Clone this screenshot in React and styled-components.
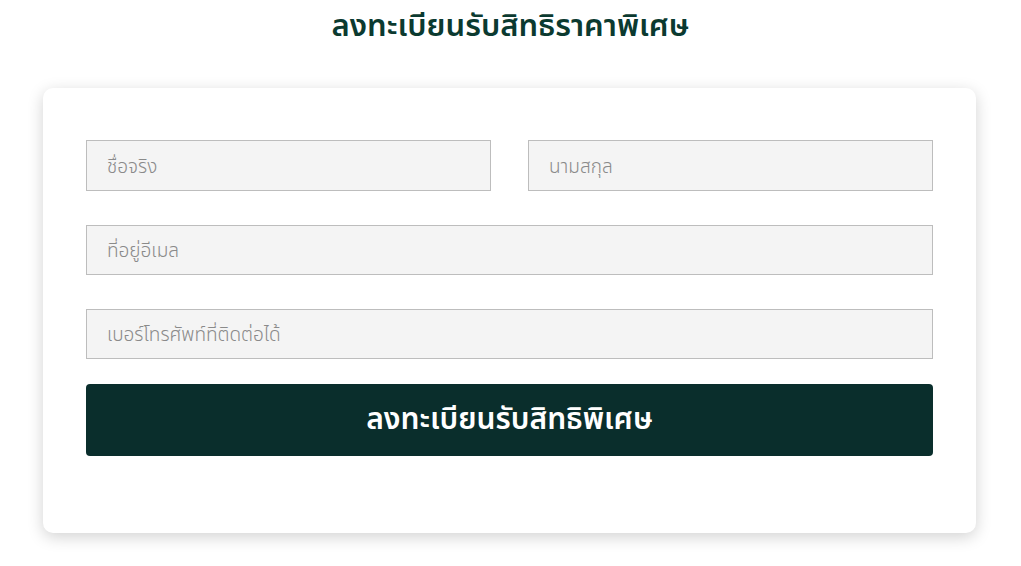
import styled, { createGlobalStyle } from "styled-components";

const GlobalStyle = createGlobalStyle`
  body {
    margin: 0;
    background: #ffffff;
    font-family: "Noto Sans", "Noto Sans Thai", sans-serif;
  }
`;

const App = () => {
  return (
    <Page>
      <GlobalStyle />
      <Title>ลงทะเบียนรับสิทธิราคาพิเศษ</Title>
      <Card>
        <Form onSubmit={(event) => event.preventDefault()}>
          <Row>
            <Input $tall placeholder="ชื่อจริง" />
            <Input $tall placeholder="นามสกุล" />
          </Row>
          <Input placeholder="ที่อยู่อีเมล" />
          <Input placeholder="เบอร์โทรศัพท์ที่ติดต่อได้" />
          <SubmitButton type="submit">ลงทะเบียนรับสิทธิพิเศษ</SubmitButton>
        </Form>
      </Card>
    </Page>
  );
};

const Page = styled.main`
  width: 1021px;
  height: 566px;
  overflow: hidden;
  padding-top: 4px;
  box-sizing: border-box;
`;

const Title = styled.h1`
  margin: 0;
  height: 40px;
  line-height: 40px;
  text-align: center;
  font-size: 31px;
  font-weight: 600;
  color: #0b3a30;
`;

const Card = styled.section`
  margin: 44px 0 0 43px;
  width: 933px;
  box-sizing: border-box;
  padding: 52px 43px 77px;
  background: #ffffff;
  border-radius: 10px;
  box-shadow: 0 4px 16px rgba(0, 0, 0, 0.18);
`;

const Form = styled.form`
  display: flex;
  flex-direction: column;
  gap: 34px;

  & > button {
    margin-top: -9px;
  }
`;

const Row = styled.div`
  display: grid;
  grid-template-columns: 1fr 1fr;
  gap: 37px;
`;

const Input = styled.input`
  box-sizing: border-box;
  width: 100%;
  height: ${(props) => (props.$tall ? "51px" : "50px")};
  padding: 0 20px;
  background: #f4f4f4;
  border: 1px solid #bdbdbd;
  border-radius: 0;
  font-family: inherit;
  font-size: 19px;
  font-weight: 300;
  color: #333;
  outline: none;

  &::placeholder {
    color: #8a8a8a;
  }
`;

const SubmitButton = styled.button`
  height: 72px;
  border: 0;
  border-radius: 4px;
  background: #0a2e2c;
  color: #ffffff;
  font-family: inherit;
  font-size: 30px;
  font-weight: 600;
  cursor: pointer;
`;

export default App;
